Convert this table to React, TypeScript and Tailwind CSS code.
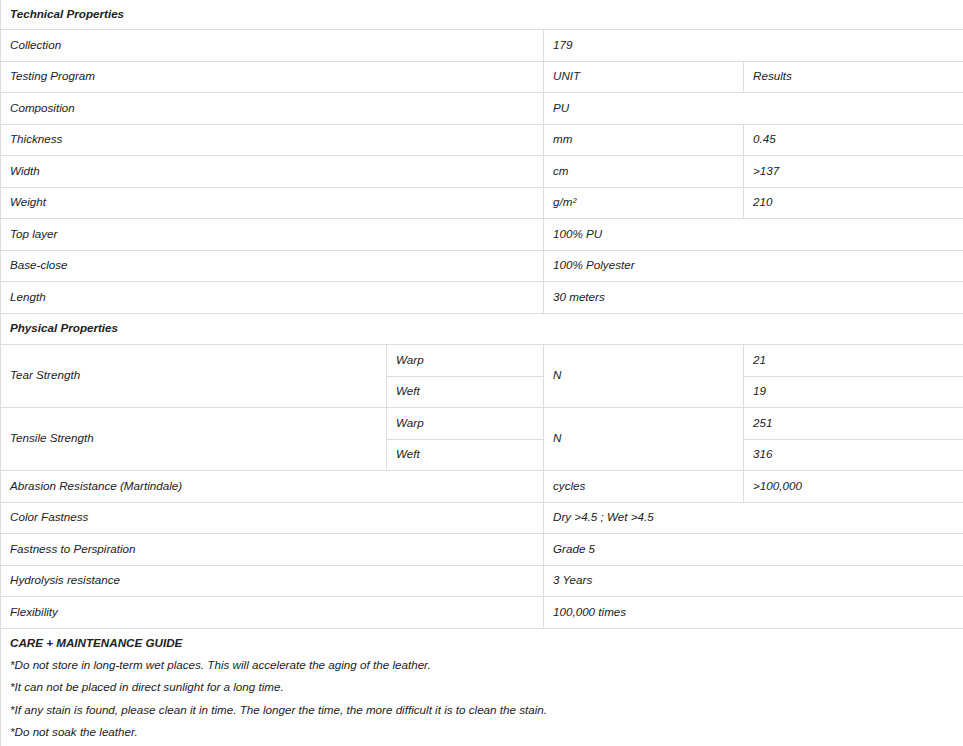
import React from "react";

type Row = {
    label: string;
    unit?: string;
    value?: string;
    // when set, the value spans both unit and result columns
    span?: boolean;
    sup?: boolean;
};

const technical: Row[] = [
    { label: "Collection", value: "179", span: true },
    { label: "Testing Program", unit: "UNIT", value: "Results" },
    { label: "Composition", value: "PU", span: true },
    { label: "Thickness", unit: "mm", value: "0.45" },
    { label: "Width", unit: "cm", value: ">137" },
    { label: "Weight", unit: "g/m", value: "210", sup: true },
    { label: "Top layer", value: "100% PU", span: true },
    { label: "Base-close", value: "100% Polyester", span: true },
    { label: "Length", value: "30 meters", span: true },
];

const strengths = [
    { label: "Tear Strength", warp: "21", weft: "19" },
    { label: "Tensile Strength", warp: "251", weft: "316" },
];

const physical: Row[] = [
    { label: "Abrasion Resistance (Martindale)", unit: "cycles", value: ">100,000" },
    { label: "Color Fastness", value: "Dry >4.5 ; Wet >4.5", span: true },
    { label: "Fastness to Perspiration", value: "Grade 5", span: true },
    { label: "Hydrolysis resistance", value: "3 Years", span: true },
    { label: "Flexibility", value: "100,000 times", span: true },
];

const care = [
    "*Do not store in long-term wet places. This will accelerate the aging of the leather.",
    "*It can not be placed in direct sunlight for a long time.",
    "*If any stain is found, please clean it in time. The longer the time, the more difficult it is to clean the stain.",
    "*Do not soak the leather.",
];

const cell = "border-l border-b border-[#dddddd] pl-[9px] pb-[2px] align-middle text-left font-normal";

function SimpleRow({ row }: { row: Row }) {
    return (
        <tr className="h-[31.5px]">
            <td colSpan={2} className={cell}>{row.label}</td>
            {row.span ? (
                <td colSpan={2} className={cell}>{row.value}</td>
            ) : (
                <>
                    <td className={cell}>
                        {row.unit}
                        {row.sup && <span>²</span>}
                    </td>
                    <td className={cell}>{row.value}</td>
                </>
            )}
        </tr>
    );
}

export default function App() {
    return (
        <div className="w-[963px] overflow-hidden bg-white text-[11.65px] italic text-[#222222] font-['Liberation_Sans',Arial,sans-serif]">
            <table className="w-[963px] table-fixed border-separate border-spacing-0">
                <colgroup>
                    <col className="w-[386px]" />
                    <col className="w-[157px]" />
                    <col className="w-[200px]" />
                    <col className="w-[220px]" />
                </colgroup>
                <tbody>
                    <tr className="h-[30px]">
                        <th colSpan={4} className={cell + " !font-bold"}>Technical Properties</th>
                    </tr>
                    {technical.map((r) => (
                        <SimpleRow key={r.label} row={r} />
                    ))}
                    <tr className="h-[31.5px]">
                        <th colSpan={4} className={cell + " !font-bold"}>Physical Properties</th>
                    </tr>
                    {strengths.map((s) => (
                        <React.Fragment key={s.label}>
                            <tr className="h-[31.5px]">
                                <td rowSpan={2} className={cell}>{s.label}</td>
                                <td className={cell}>Warp</td>
                                <td rowSpan={2} className={cell}>N</td>
                                <td className={cell}>{s.warp}</td>
                            </tr>
                            <tr className="h-[31.5px]">
                                <td className={cell}>Weft</td>
                                <td className={cell}>{s.weft}</td>
                            </tr>
                        </React.Fragment>
                    ))}
                    {physical.map((r) => (
                        <SimpleRow key={r.label} row={r} />
                    ))}
                </tbody>
            </table>
            <div className="border-l border-[#dddddd] pl-[9px] pt-[3px] pb-[4px]">
                <p className="font-bold leading-[22.4px]">CARE + MAINTENANCE GUIDE</p>
                {care.map((line) => (
                    <p key={line} className="leading-[22.4px]">{line}</p>
                ))}
            </div>
        </div>
    );
}
